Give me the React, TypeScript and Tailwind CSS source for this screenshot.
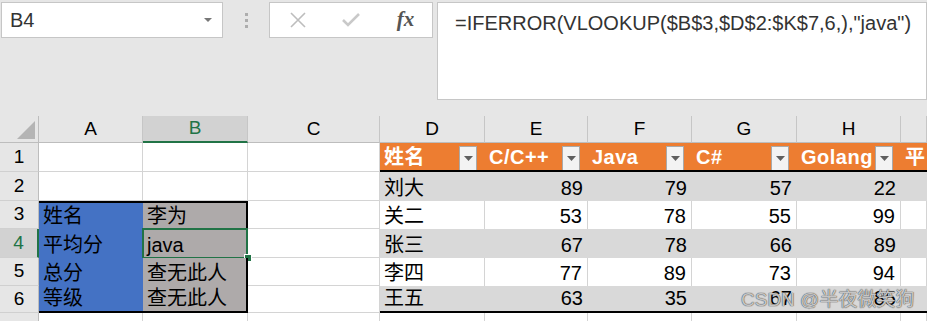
const FONT = { fontFamily: '"Liberation Sans", "Noto Sans CJK SC", sans-serif' };

const COLS = ['A', 'B', 'C', 'D', 'E', 'F', 'G', 'H', 'I'];

const HEAD = ['姓名', 'C/C++', 'Java', 'C#', 'Golang', '平'];

const ROWS = [
  ['刘大', 89, 79, 57, 22],
  ['关二', 53, 78, 55, 99],
  ['张三', 67, 78, 66, 89],
  ['李四', 77, 89, 73, 94],
  ['王五', 63, 35, 67, 85],
];

const LEFT: Record<number, string[]> = {
  3: ['姓名', '李为'],
  4: ['平均分', 'java'],
  5: ['总分', '查无此人'],
  6: ['等级', '查无此人'],
};

function FilterButton() {
  return (
    <div className="absolute right-[8px] top-[3px] w-[18px] h-[25px] bg-[#f3f3f3] border border-[#a9a9a9] flex items-center justify-center">
      <svg width="9" height="5" viewBox="0 0 9 5">
        <path d="M0 0h9L4.5 5z" fill="#5f5f5f" />
      </svg>
    </div>
  );
}

function Cell({ r, c }: { r: number; c: number }) {
  const inTable = c >= 3 && r <= 6;

  // 表头（橙色）
  if (inTable && r === 1) {
    const text = HEAD[c - 3];
    return (
      <div className="relative bg-[#ed7d31] border-b-2 border-black flex items-center pl-[4px] text-white font-bold text-[20px] tracking-[0.5px] overflow-hidden whitespace-nowrap">
        {text}
        {c < 8 && <FilterButton />}
      </div>
    );
  }

  // 表体
  if (inTable && r >= 2) {
    const row = ROWS[r - 2];
    const v = c < 8 ? row[c - 3] : '';
    const band = r % 2 === 0;
    const cls = band
      ? 'bg-[#d9d9d9]'
      : 'bg-white border-r border-[#d4d4d4]';
    return (
      <div
        className={`${cls} ${r === 6 ? 'border-b-2 border-b-black' : ''} flex items-end pb-[1px] text-[20px] leading-[24px] text-black ${
          c === 3 ? 'justify-start pl-[4px]' : 'justify-end pr-[5px]'
        }`}
      >
        {v}
      </div>
    );
  }

  // A3:B6
  if (r >= 3 && r <= 6 && c <= 1) {
    const text = LEFT[r][c];
    const bg = c === 0 ? 'bg-[#4472c4]' : 'bg-[#aeaaaa] border-r-2 border-r-black';
    return (
      <div
        className={`relative ${bg} ${r === 3 ? 'border-t-2 border-t-black' : ''} ${
          r === 6 ? 'border-b-2 border-b-black' : ''
        } flex items-end pb-[1px] pl-[4px] text-[20px] leading-[24px] text-black whitespace-nowrap`}
      >
        {text}
        {r === 4 && c === 1 && (
          <>
            <div className="absolute left-[-1px] top-[-1px] right-[-2px] bottom-[-1px] border-2 border-[#217346]" />
            <div className="absolute right-[-6px] bottom-[-4px] w-[8px] h-[8px] bg-[#217346] border border-white" />
          </>
        )}
      </div>
    );
  }

  return <div className="bg-white border-r border-b border-[#d4d4d4]" />;
}

export default function App() {
  return (
    <div className="w-[927px] h-[321px] overflow-hidden bg-[#e6e6e6] relative" style={FONT}>
      {/* 编辑栏 */}
      <div className="h-[116px] flex items-start pt-[2px] pl-[1px]">
        <div className="w-[222px] h-[36px] bg-white border border-[#c6c6c6] flex items-center justify-between pl-[8px] pr-[10px]">
          <span className="text-[20px] text-[#333]">B4</span>
          <svg width="8" height="4" viewBox="0 0 8 4">
            <path d="M0 0h8L4 4z" fill="#777" />
          </svg>
        </div>
        <div className="w-[46px] h-[36px] flex flex-col items-center justify-center gap-[3px]">
          <div className="w-[3px] h-[3px] bg-[#adadad]" />
          <div className="w-[3px] h-[3px] bg-[#adadad]" />
          <div className="w-[3px] h-[3px] bg-[#adadad]" />
        </div>
        <div className="w-[164px] h-[36px] bg-white border border-[#c6c6c6] flex items-center">
          <div className="w-[55px] flex justify-center">
            <svg width="16" height="16" viewBox="0 0 16 16">
              <path d="M1 1L15 15M15 1L1 15" stroke="#bdbdbd" strokeWidth="1.6" />
            </svg>
          </div>
          <div className="w-[52px] flex justify-center">
            <svg width="18" height="14" viewBox="0 0 18 14">
              <path d="M1 7l5 5L17 1" stroke="#c9c9c9" strokeWidth="2.6" fill="none" />
            </svg>
          </div>
          <div
            className="flex-1 flex justify-center text-[21px] italic text-[#555] font-bold pl-[2px]"
            style={{ fontFamily: '"Liberation Serif", serif' }}
          >
            fx
          </div>
        </div>
        <div className="ml-[4px] flex-1 h-[98px] bg-white border border-[#c6c6c6] pl-[17px] pt-[5px] text-[20px] text-[#333] whitespace-nowrap">
          =IFERROR(VLOOKUP($B$3,$D$2:$K$7,6,),"java")
        </div>
      </div>

      {/* 工作表 */}
      <div className="grid grid-cols-[39px_104px_105px_132px_105px_103px_104px_105px_104px_1fr] grid-rows-[27px_29px_29px_28px_29px_28px_27px_29px]">
        <div className="border-r border-b border-[#bdbdbd] flex items-end justify-end p-[3px]">
          <svg width="18" height="18" viewBox="0 0 18 18">
            <path d="M18 0V18H0z" fill="#b4b4b4" />
          </svg>
        </div>
        {COLS.map((l) => (
          <div
            key={l}
            className={`flex items-center justify-center text-[19px] border-r border-[#c6c6c6] ${
              l === 'B'
                ? 'bg-[#d2d2d2] text-[#217346] border-b-2 border-b-[#217346]'
                : 'text-black border-b border-b-[#bdbdbd]'
            }`}
          >
            {l === 'I' ? '' : l}
          </div>
        ))}
        {[1, 2, 3, 4, 5, 6, 7].map((r) => (
          <>
            <div
              key={`h${r}`}
              className={`flex items-center justify-center text-[19px] border-b border-[#d0d0d0] ${
                r === 4
                  ? 'bg-[#d2d2d2] text-[#217346] border-r-2 border-r-[#217346]'
                  : 'text-black border-r border-r-[#bdbdbd]'
              }`}
            >
              {r < 7 ? r : ''}
            </div>
            {COLS.map((_, c) => (
              <Cell key={`${r}-${c}`} r={r} c={c} />
            ))}
          </>
        ))}
      </div>

      {/* 水印 */}
      <div className="absolute left-[741px] top-[288px] text-[19px] leading-[24px] text-white/70 [text-shadow:0_0_1px_#444,0_0_1px_#444] whitespace-nowrap">
        CSDN @半夜微笑狗
      </div>
    </div>
  );
}
